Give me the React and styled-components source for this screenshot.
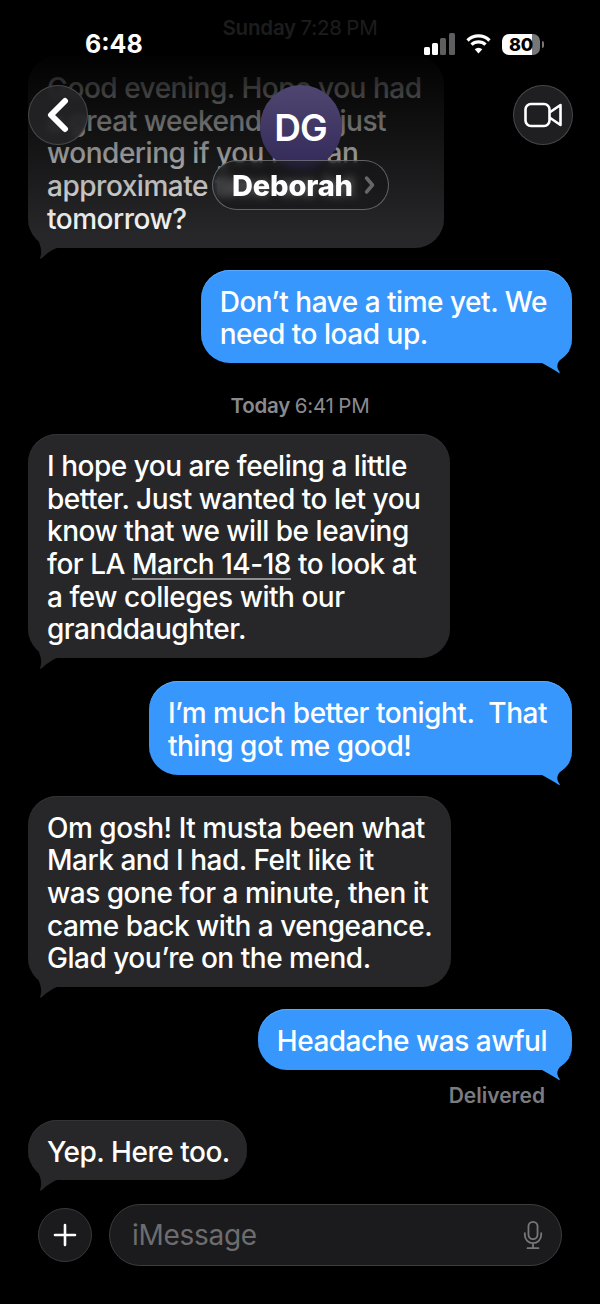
import React from 'react';
import styled, {createGlobalStyle} from 'styled-components';

const GlobalStyle = createGlobalStyle`
  html, body {
    margin: 0;
    padding: 0;
    background: #000;
  }
  * {
    box-sizing: border-box;
  }
`;

const Screen = styled.div`
  position: relative;
  width: 600px;
  height: 1304px;
  overflow: hidden;
  background: #000;
  color: #fff;
  font-family: Inter, 'Liberation Sans', sans-serif;
`;

const Thread = styled.div`
  display: flex;
  flex-direction: column;
  padding: 16px 28px 0;
`;

const Stamp = styled.div`
  align-self: center;
  font-size: 20.5px;
  line-height: 24px;
  color: #8a8a8e;
  letter-spacing: -0.2px;
  word-spacing: -1px;
  margin-top: ${p => p.$top}px;

  b {
    font-weight: 600;
  }
`;

const Bubble = styled.div`
  position: relative;
  align-self: ${p => (p.$out ? 'flex-end' : 'flex-start')};
  width: ${p => (p.$width ? `${p.$width}px` : 'auto')};
  margin-top: ${p => p.$top}px;
  padding: 16px 25px 12px 19px;
  border-radius: 29px;
  ${p => p.$out && 'border-bottom-right-radius: 24px;'}
  font-size: 28px;
  font-weight: 450;
  line-height: 32.7px;
  letter-spacing: -0.48px;
  white-space: nowrap;
  background: ${p => (p.$out ? '#3797fd' : '#272729')};
  box-shadow: inset 0 1px 0 ${p => (p.$out ? '#5aaaff' : '#343436')};
`;

const Tail = styled.svg`
  position: absolute;
  bottom: -11px;
  ${p => (p.$out ? 'right: 0;' : 'left: 6px;')}
  width: 30px;
  height: 24px;
  fill: ${p => (p.$out ? '#3797fd' : '#272729')};
`;

const Underlined = styled.span`
  text-decoration: underline;
  text-decoration-color: #8f8f93;
  text-decoration-thickness: 2px;
  text-underline-offset: 4px;
`;

const Delivered = styled.div`
  align-self: flex-end;
  margin: 14px 27px 0 0;
  font-size: 21px;
  line-height: 24px;
  font-weight: 600;
  color: #7c7c80;
`;

const Composer = styled.div`
  display: flex;
  align-items: center;
  gap: 17px;
  margin: 24px 10px 0 10px;
`;

const AddButton = styled.div`
  display: flex;
  align-items: center;
  justify-content: center;
  width: 54px;
  height: 54px;
  border-radius: 50%;
  background: #1b1b1d;
  border: 1px solid #39393b;
`;

const Field = styled.div`
  flex: 1;
  display: flex;
  align-items: center;
  justify-content: space-between;
  height: 62px;
  padding: 0 18px 0 22px;
  border-radius: 31px;
  background: #1b1b1d;
  border: 1px solid #3c3c3e;
  font-size: 28px;
  letter-spacing: -0.3px;
  color: #6d6d70;
`;

const Fade = styled.div`
  position: absolute;
  top: 0;
  left: 0;
  width: 100%;
  height: 245px;
  background: linear-gradient(
    to bottom,
    rgba(0, 0, 0, 0.8) 0,
    rgba(0, 0, 0, 0.8) 36px,
    rgba(0, 0, 0, 0.97) 54px,
    rgba(0, 0, 0, 0.72) 100px,
    rgba(0, 0, 0, 0.32) 175px,
    rgba(0, 0, 0, 0) 235px
  );
  pointer-events: none;
`;

const StatusBar = styled.div`
  position: absolute;
  top: 29px;
  left: 85px;
  right: 60px;
  height: 30px;
  display: flex;
  align-items: center;
`;

const Clock = styled.div`
  flex: 1;
  font-size: 25px;
  font-weight: 700;
`;

const StatusIcons = styled.div`
  display: flex;
  align-items: center;
  gap: 11px;
`;

const Battery = styled.div`
  position: relative;
  display: flex;
  align-items: center;
  justify-content: center;
  width: 38px;
  height: 21px;
  border-radius: 7px;
  background: linear-gradient(to right, #fff 80%, #777 80%);
  color: #000;
  font-size: 18px;
  font-weight: 800;
  letter-spacing: -0.2px;

  &::after {
    content: '';
    position: absolute;
    right: -4px;
    top: 7px;
    width: 2px;
    height: 7px;
    border-radius: 0 2px 2px 0;
    background: #777;
  }
`;

const NavBar = styled.div`
  position: absolute;
  top: 85px;
  left: 28px;
  right: 27px;
  display: flex;
  justify-content: space-between;
  align-items: flex-start;
`;

const RoundButton = styled.div`
  display: flex;
  align-items: center;
  justify-content: center;
  width: 60px;
  height: 60px;
  border-radius: 50%;
  background: rgba(38, 38, 40, 0.82);
  border: 1px solid rgba(120, 120, 122, 0.45);
  backdrop-filter: blur(3px);
`;

const Contact = styled.div`
  display: flex;
  flex-direction: column;
  align-items: center;
`;

const Avatar = styled.div`
  display: flex;
  align-items: center;
  justify-content: center;
  width: 82px;
  height: 84px;
  border-radius: 50%;
  background: linear-gradient(to bottom, #4f4670, #332a5a);
  font-size: 37px;
  font-weight: 600;
  letter-spacing: -1px;
`;

const NamePill = styled.div`
  display: flex;
  align-items: center;
  gap: 11px;
  width: 177px;
  height: 50px;
  margin-top: -9px;
  padding-left: 19px;
  border-radius: 25px;
  background: rgba(20, 20, 22, 0.45);
  border: 1px solid rgba(150, 150, 152, 0.6);
  backdrop-filter: blur(4px);
  font-size: 29px;
  font-weight: 800;
  letter-spacing: -0.15px;
`;

const TailShape = ({out}) => (
  <Tail $out={out} viewBox="0 0 30 24">
    {out ? (
      <path d="M0 13 C6 16 12 20 17 23 C18 24 18 22.500 17 21 C14 17 15 12 20 8 C24 5 26 3 27.500 0 L0 0 Z" />
    ) : (
      <path d="M2 0 C6 9 9 16 6 23 C6 24 7 24 8 23 C13 18 19 14 26 12 L26 0 Z" />
    )}
  </Tail>
);

const Message = ({out, top, width, children}) => (
  <Bubble $out={out} $top={top} $width={width}>
    {children}
    <TailShape out={out} />
  </Bubble>
);

const App = () => {
  return (
    <Screen>
      <GlobalStyle />
      <Thread>
        <Stamp $top={0}>
          <b>Sunday</b> 7:28 PM
        </Stamp>
        <Message top={16} width={416}>
          Good evening. Hope you had
          <br />a great weekend. Was just
          <br />
          wondering if you had an
          <br />
          approximate time we let
          <br />
          tomorrow?
        </Message>
        <Message out top={22}>
          Don’t have a time yet. We
          <br />
          need to load up.
        </Message>
        <Stamp $top={31}>
          <b>Today</b> 6:41 PM
        </Stamp>
        <Message top={16} width={422}>
          I hope you are feeling a little
          <br />
          better. Just wanted to let you
          <br />
          know that we will be leaving
          <br />
          for LA <Underlined>March 14-18</Underlined> to look at
          <br />a few colleges with our
          <br />
          granddaughter.
        </Message>
        <Message out top={23}>
          I’m much better tonight.&nbsp; That
          <br />
          thing got me good!
        </Message>
        <Message top={21} width={423}>
          Om gosh! It musta been what
          <br />
          Mark and I had. Felt like it
          <br />
          was gone for a minute, then it
          <br />
          came back with a vengeance.
          <br />
          Glad you’re on the mend.
        </Message>
        <Message out top={22}>
          Headache was awful
        </Message>
        <Delivered>Delivered</Delivered>
        <Message top={12} width={219}>
          Yep. Here too.
        </Message>
        <Composer>
          <AddButton>
            <svg width="24" height="24" viewBox="0 0 24 24" fill="none" stroke="#fff" strokeWidth="2.6" strokeLinecap="round">
              <path d="M12 2v20M2 12h20" />
            </svg>
          </AddButton>
          <Field>
            iMessage
            <svg width="20" height="30" viewBox="0 0 22 32" fill="none" stroke="#77777a" strokeWidth="2" strokeLinecap="round">
              <rect x="6" y="1.500" width="10" height="19" rx="5" />
              <path d="M2 14v2a9 9 0 0 0 18 0v-2M11 25v5M5 30.500h12" />
            </svg>
          </Field>
        </Composer>
      </Thread>

      <Fade />

      <StatusBar>
        <Clock>6:48</Clock>
        <StatusIcons>
          <svg width="31" height="22" viewBox="0 0 31 22">
            <rect x="0" y="14" width="6" height="8" rx="1.500" fill="#fff" />
            <rect x="8" y="10" width="6" height="12" rx="1.500" fill="#fff" />
            <rect x="16" y="5" width="6" height="17" rx="1.500" fill="#5e5e60" />
            <rect x="25" y="0" width="6" height="22" rx="1.500" fill="#5e5e60" />
          </svg>
          <svg width="25" height="20" viewBox="0 0 25 20" fill="none" stroke="#fff" strokeWidth="3.200">
            <path d="M1.500 6.500a15.500 15.500 0 0 1 22 0" />
            <path d="M5.500 10.700a10 10 0 0 1 14 0" />
            <path d="M12.500 19.500l-3.800-4.300a5.500 5.500 0 0 1 7.600 0z" fill="#fff" stroke="none" />
          </svg>
          <Battery>80</Battery>
        </StatusIcons>
      </StatusBar>

      <NavBar>
        <RoundButton>
          <svg width="24" height="36" viewBox="0 0 24 36" fill="none" stroke="#fff" strokeWidth="6" strokeLinecap="round" strokeLinejoin="round">
            <path d="M19 4 L5 18 L19 32" />
          </svg>
        </RoundButton>
        <Contact>
          <Avatar>DG</Avatar>
          <NamePill>
            Deborah
            <svg width="11" height="20" viewBox="0 0 11 20" fill="none" stroke="#666668" strokeWidth="3.500" strokeLinecap="round" strokeLinejoin="round">
              <path d="M2.500 3l6 7-6 7" />
            </svg>
          </NamePill>
        </Contact>
        <RoundButton>
          <svg width="38" height="26" viewBox="0 0 38 26" fill="none" stroke="#fff" strokeWidth="2.600" strokeLinejoin="round">
            <rect x="1.500" y="2" width="24" height="22" rx="5.500" />
            <path d="M25.500 10.500 L36.500 3 V23 L25.500 15.500" />
          </svg>
        </RoundButton>
      </NavBar>
    </Screen>
  );
};

export default App;
